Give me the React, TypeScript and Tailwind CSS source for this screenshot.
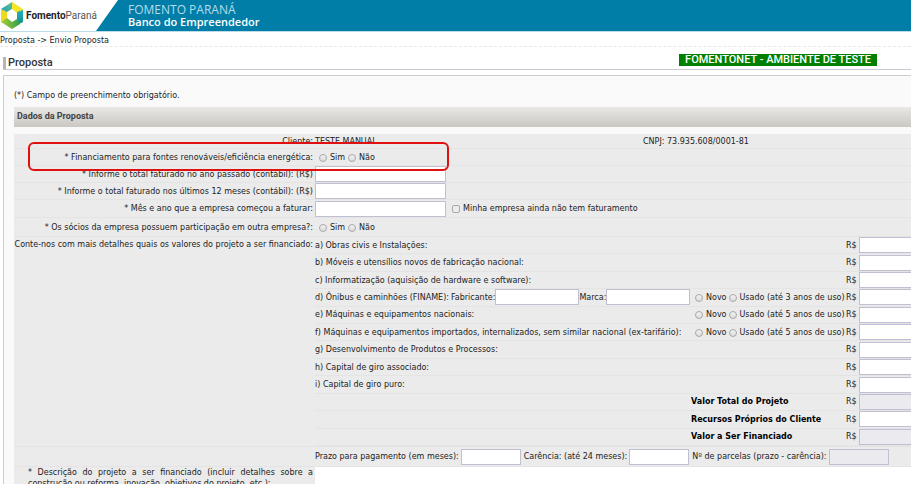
import type { ReactNode } from "react";

const box = "block h-4 border border-[#bfc0d4] px-1 text-[8px] outline-none";

function Field({ label, width, readOnly = false }: { label: string; width: string; readOnly?: boolean }) {
  return (
    <input
      type="text"
      aria-label={label}
      readOnly={readOnly}
      className={`${box} ${width} ${readOnly ? "bg-[#ebebef]" : "bg-white"}`}
    />
  );
}

function Radio({ name, label }: { name: string; label: string }) {
  return (
    <label className="flex items-center gap-[3px] whitespace-nowrap">
      <input
        type="radio"
        name={name}
        className="mt-px size-2 shrink-0 appearance-none rounded-full border border-[#a9a9a9] bg-linear-to-b from-[#f2f2f2] to-[#dcdcdc] checked:bg-[#555]"
      />
      {label}
    </label>
  );
}

function Row({ label, height, children }: { label: string; height: string; children: ReactNode }) {
  return (
    <div className={`flex items-center border-b border-[#e4e4e4] ${height}`}>
      <span className="w-[299px] shrink-0 whitespace-nowrap text-right">{label}</span>
      <div className="flex min-w-0 flex-1 items-center pl-0.5">{children}</div>
    </div>
  );
}

type Item = { text: string; years?: number; vehicle?: boolean; total?: boolean; readOnly?: boolean };

const items: Item[] = [
  { text: "a) Obras civis e Instalações:" },
  { text: "b) Móveis e utensílios novos de fabricação nacional:" },
  { text: "c) Informatização (aquisição de hardware e software):" },
  { text: "d) Ônibus e caminhões (FINAME):", years: 3, vehicle: true },
  { text: "e) Máquinas e equipamentos nacionais:", years: 5 },
  { text: "f) Máquinas e equipamentos importados, internalizados, sem similar nacional (ex-tarifário):", years: 5 },
  { text: "g) Desenvolvimento de Produtos e Processos:" },
  { text: "h) Capital de giro associado:" },
  { text: "i) Capital de giro puro:" },
  { text: "Valor Total do Projeto", total: true, readOnly: true },
  { text: "Recursos Próprios do Cliente", total: true },
  { text: "Valor a Ser Financiado", total: true, readOnly: true },
];

function ItemRow({ item }: { item: Item }) {
  return (
    <div className="flex items-center border-b border-[#e4e4e4]">
      <div className="flex w-[376px] shrink-0 items-center whitespace-nowrap">
        {!item.total && <span>{item.text}</span>}
        {item.vehicle && (
          <>
            <label className="ml-0.5 flex items-center">
              Fabricante:
              <Field label="Fabricante" width="w-[84px]" />
            </label>
            <label className="flex items-center">
              Marca:
              <Field label="Marca" width="w-[84px]" />
            </label>
          </>
        )}
      </div>
      <div className="flex w-[155px] shrink-0 items-center whitespace-nowrap">
        {item.total && <b className="text-black">{item.text}</b>}
        {item.years && (
          <div className="flex items-center gap-0.5 pl-1">
            <Radio name={item.text} label="Novo" />
            <Radio name={item.text} label={`Usado (até ${item.years} anos de uso)`} />
          </div>
        )}
      </div>
      <span className="w-[13px] shrink-0">R$</span>
      <Field label={`${item.text} R$`} width="min-w-0 flex-1 border-r-0" readOnly={item.readOnly} />
    </div>
  );
}

function Logo() {
  return (
    <svg viewBox="0 0 24 29" className="h-[29px] w-6 shrink-0" aria-hidden="true">
      <defs>
        <linearGradient id="logo-top-left" x1="0" y1="1" x2="1" y2="0">
          <stop offset="0" stopColor="#1c9fc0" />
          <stop offset="1" stopColor="#62c08a" />
        </linearGradient>
        <linearGradient id="logo-right" x1="0" y1="0" x2="0" y2="1">
          <stop offset="0" stopColor="#28b0c4" />
          <stop offset="1" stopColor="#0f8f8a" />
        </linearGradient>
        <linearGradient id="logo-bottom" x1="0" y1="0" x2="1" y2="0">
          <stop offset="0" stopColor="#a9cf38" />
          <stop offset="1" stopColor="#2f9e4a" />
        </linearGradient>
      </defs>
      <path d="M1 8 L12 1 L12 8 L7 11 L4 12 Z" fill="url(#logo-top-left)" />
      <path d="M12 1 L23 8 L23 11 L17 12 L12 8 Z" fill="#f6e528" />
      <path d="M23 9 L23 21 L19 23 L17 18 L17 11 Z" fill="url(#logo-right)" />
      <path d="M1 8 L7 11 L7 18 L3 22 L1 21 Z" fill="#f1d91c" />
      <path d="M1 21 L7 17 L12 21 L17 18 L20 23 L12 28 Z" fill="url(#logo-bottom)" />
    </svg>
  );
}

export default function App() {
  return (
    <div className="h-screen overflow-hidden bg-white font-['DejaVu_Sans',sans-serif] text-[8px] leading-[11px] text-[#222]">
      <header className="flex h-8 border-b border-[#b9dce8] bg-[#007ea7] font-['Open_Sans',sans-serif]">
        <div className="flex w-[118px] shrink-0 items-center bg-white [clip-path:polygon(0_0,100%_0,96px_100%,0_100%)]">
          <Logo />
          <span className="ml-0.5 font-['Roboto',sans-serif] text-[10px] text-[#555]">
            <b className="text-[#222]">Fomento</b>Paraná
          </span>
        </div>
        <div className="ml-2.5 pt-1 leading-3">
          <p className="text-[12px] text-[#b5dceb]">FOMENTO PARANÁ</p>
          <p className="text-[11px] font-semibold text-white">Banco do Empreendedor</p>
        </div>
      </header>

      <nav className="h-[15px] border-b border-dashed border-[#f0e4e4] pt-[3px]">Proposta -&gt; Envio Proposta</nav>

      <div className="ml-[3px] mt-[7px] flex h-4 items-start justify-between border-b border-[#c8c8d2] font-['Roboto',sans-serif]">
        <h1 className="mt-[3px] border-l-3 border-[#b4b4be] pl-0.5 text-[11px] font-medium leading-3 text-[#333]">Proposta</h1>
        <strong className="mr-[34px] bg-[#008000] px-1.5 text-[11px] font-medium leading-3 text-white">FOMENTONET - AMBIENTE DE TESTE</strong>
      </div>

      <main className="ml-[3px] mt-[5px] border-l border-t border-[#ccccd2] bg-[#fafafa] pl-2.5 pt-3.5">
        <p>(*) Campo de preenchimento obrigatório.</p>
        <h2 className="mt-1.5 h-5 bg-linear-to-b from-[#e9e8e6] to-[#cbc8c1] pl-[3px] font-['Roboto',sans-serif] text-[9px] font-bold leading-[18px] text-[#444]">
          Dados da Proposta
        </h2>

        <form className="relative mt-[7px] bg-[#ebebeb]">
          <Row label="Cliente:" height="h-[15px]">
            <span className="w-[328px]">TESTE MANUAL</span>
            <span>CNPJ: 73.935.608/0001-81</span>
          </Row>
          <Row label="* Financiamento para fontes renováveis/eficiência energética:" height="h-[17px]">
            <div className="flex gap-[3px] pl-1">
              <Radio name="renovaveis" label="Sim" />
              <Radio name="renovaveis" label="Não" />
            </div>
          </Row>
          <Row label="* Informe o total faturado no ano passado (contábil): (R$)" height="h-[17px]">
            <Field label="Total faturado no ano passado" width="w-[131px]" />
          </Row>
          <Row label="* Informe o total faturado nos últimos 12 meses (contábil): (R$)" height="h-[17px]">
            <Field label="Total faturado nos últimos 12 meses" width="w-[131px]" />
          </Row>
          <Row label="* Mês e ano que a empresa começou a faturar:" height="h-[18px]">
            <Field label="Mês e ano que a empresa começou a faturar" width="w-[131px]" />
            <label className="ml-1.5 flex items-center gap-[3px]">
              <input type="checkbox" className="size-2 appearance-none rounded-xs border border-[#a9a9a9] bg-[#ececec] checked:bg-[#555]" />
              Minha empresa ainda não tem faturamento
            </label>
          </Row>
          <Row label="* Os sócios da empresa possuem participação em outra empresa?:" height="h-[19px]">
            <div className="flex gap-[3px] pl-1">
              <Radio name="socios" label="Sim" />
              <Radio name="socios" label="Não" />
            </div>
          </Row>
          <div className="flex border-b border-[#e4e4e4]">
            <span className="w-[299px] shrink-0 whitespace-nowrap pt-0.5 text-right">
              Conte-nos com mais detalhes quais os valores do projeto a ser financiado:
            </span>
            <div className="grid h-[209px] min-w-0 flex-1 auto-rows-fr pl-0.5">
              {items.map((item) => (
                <ItemRow key={item.text} item={item} />
              ))}
            </div>
          </div>
          <Row label="" height="h-5">
            <div className="flex items-center gap-[3px] whitespace-nowrap">
              <label className="flex items-center gap-0.5">
                Prazo para pagamento (em meses):
                <Field label="Prazo para pagamento" width="w-[60px]" />
              </label>
              <label className="flex items-center gap-0.5">
                Carência: (até 24 meses):
                <Field label="Carência" width="w-[60px]" />
              </label>
              <label className="flex items-center gap-0.5">
                Nº de parcelas (prazo - carência):
                <Field label="Número de parcelas" width="w-[60px]" readOnly />
              </label>
            </div>
          </Row>
          <div className="flex">
            <label htmlFor="descricao" className="w-[299px] shrink-0 pl-3.5 text-justify">
              * Descrição do projeto a ser financiado (incluir detalhes sobre a construção ou reforma, inovação, objetivos do projeto, etc.):
            </label>
            <textarea id="descricao" className="ml-0.5 h-20 min-w-0 flex-1 resize-none bg-white p-1 outline-none" />
          </div>
          <div className="pointer-events-none absolute left-3.5 top-2 h-[29px] w-[421px] rounded-md border-2 border-[#e01010]" />
        </form>
      </main>
    </div>
  );
}
